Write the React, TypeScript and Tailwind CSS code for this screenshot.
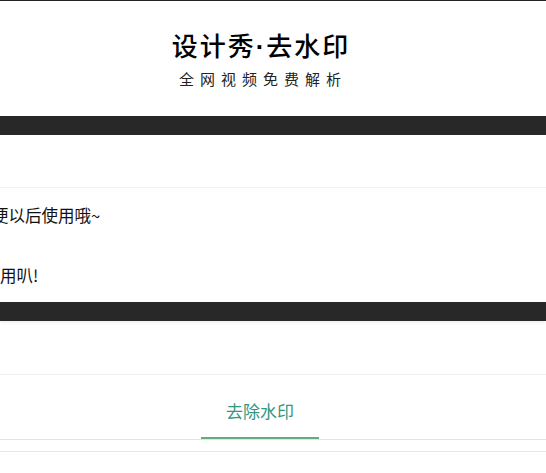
const font = { fontFamily: '"Noto Sans CJK SC", "Noto Sans", sans-serif' }

export default function App() {
  return (
    <div className="w-[546px] h-[473px] overflow-hidden bg-white text-[#111]" style={font}>
      {/* header */}
      <header className="border-t border-[#222] h-[116px] flex">
        <div className="w-[520px] flex flex-col items-center pt-[28px]">
          <h1 className="text-[26px] leading-[32px] font-medium tracking-[2px] text-black pl-[2px]">
            设计秀<span className="font-['Liberation_Sans'] font-bold">·</span>去水印
          </h1>
          <p className="mt-[6px] text-[15px] leading-[20px] tracking-[6px] text-[#222] pl-[6px]">全网视频免费解析</p>
        </div>
      </header>

      <div className="h-[19px] bg-[#282828]" />

      {/* notice */}
      <section className="pt-[52px]">
        <div className="border-t border-[#f2f2f2] pt-[15px] pb-[15px] text-[16.5px] leading-[24px] text-[#111]">
          <p className="-ml-[8px] whitespace-nowrap">便以后使用哦~</p>
          <p className="mt-[36px] whitespace-nowrap">用叭!</p>
        </div>
      </section>

      <div className="h-[19px] bg-[#282828] shadow-[0_2px_3px_rgba(0,0,0,0.06)]" />

      {/* tabs */}
      <section className="pt-[53px]">
        <div className="border-t border-[#f0f0f0]">
          <div className="w-[520px] flex justify-center pt-[24px]">
            <div className="w-[118px] flex flex-col items-center">
              <span className="text-[17px] leading-[24px] text-[#33977f]">去除水印</span>
              <div className="mt-[14px] h-[2px] w-full bg-[#62ad7c]" />
            </div>
          </div>
          <div className="border-t border-[#e3e3e3]" />
          <div className="mt-[11px] border-t border-[#e6e6e6]" />
        </div>
      </section>
    </div>
  )
}
